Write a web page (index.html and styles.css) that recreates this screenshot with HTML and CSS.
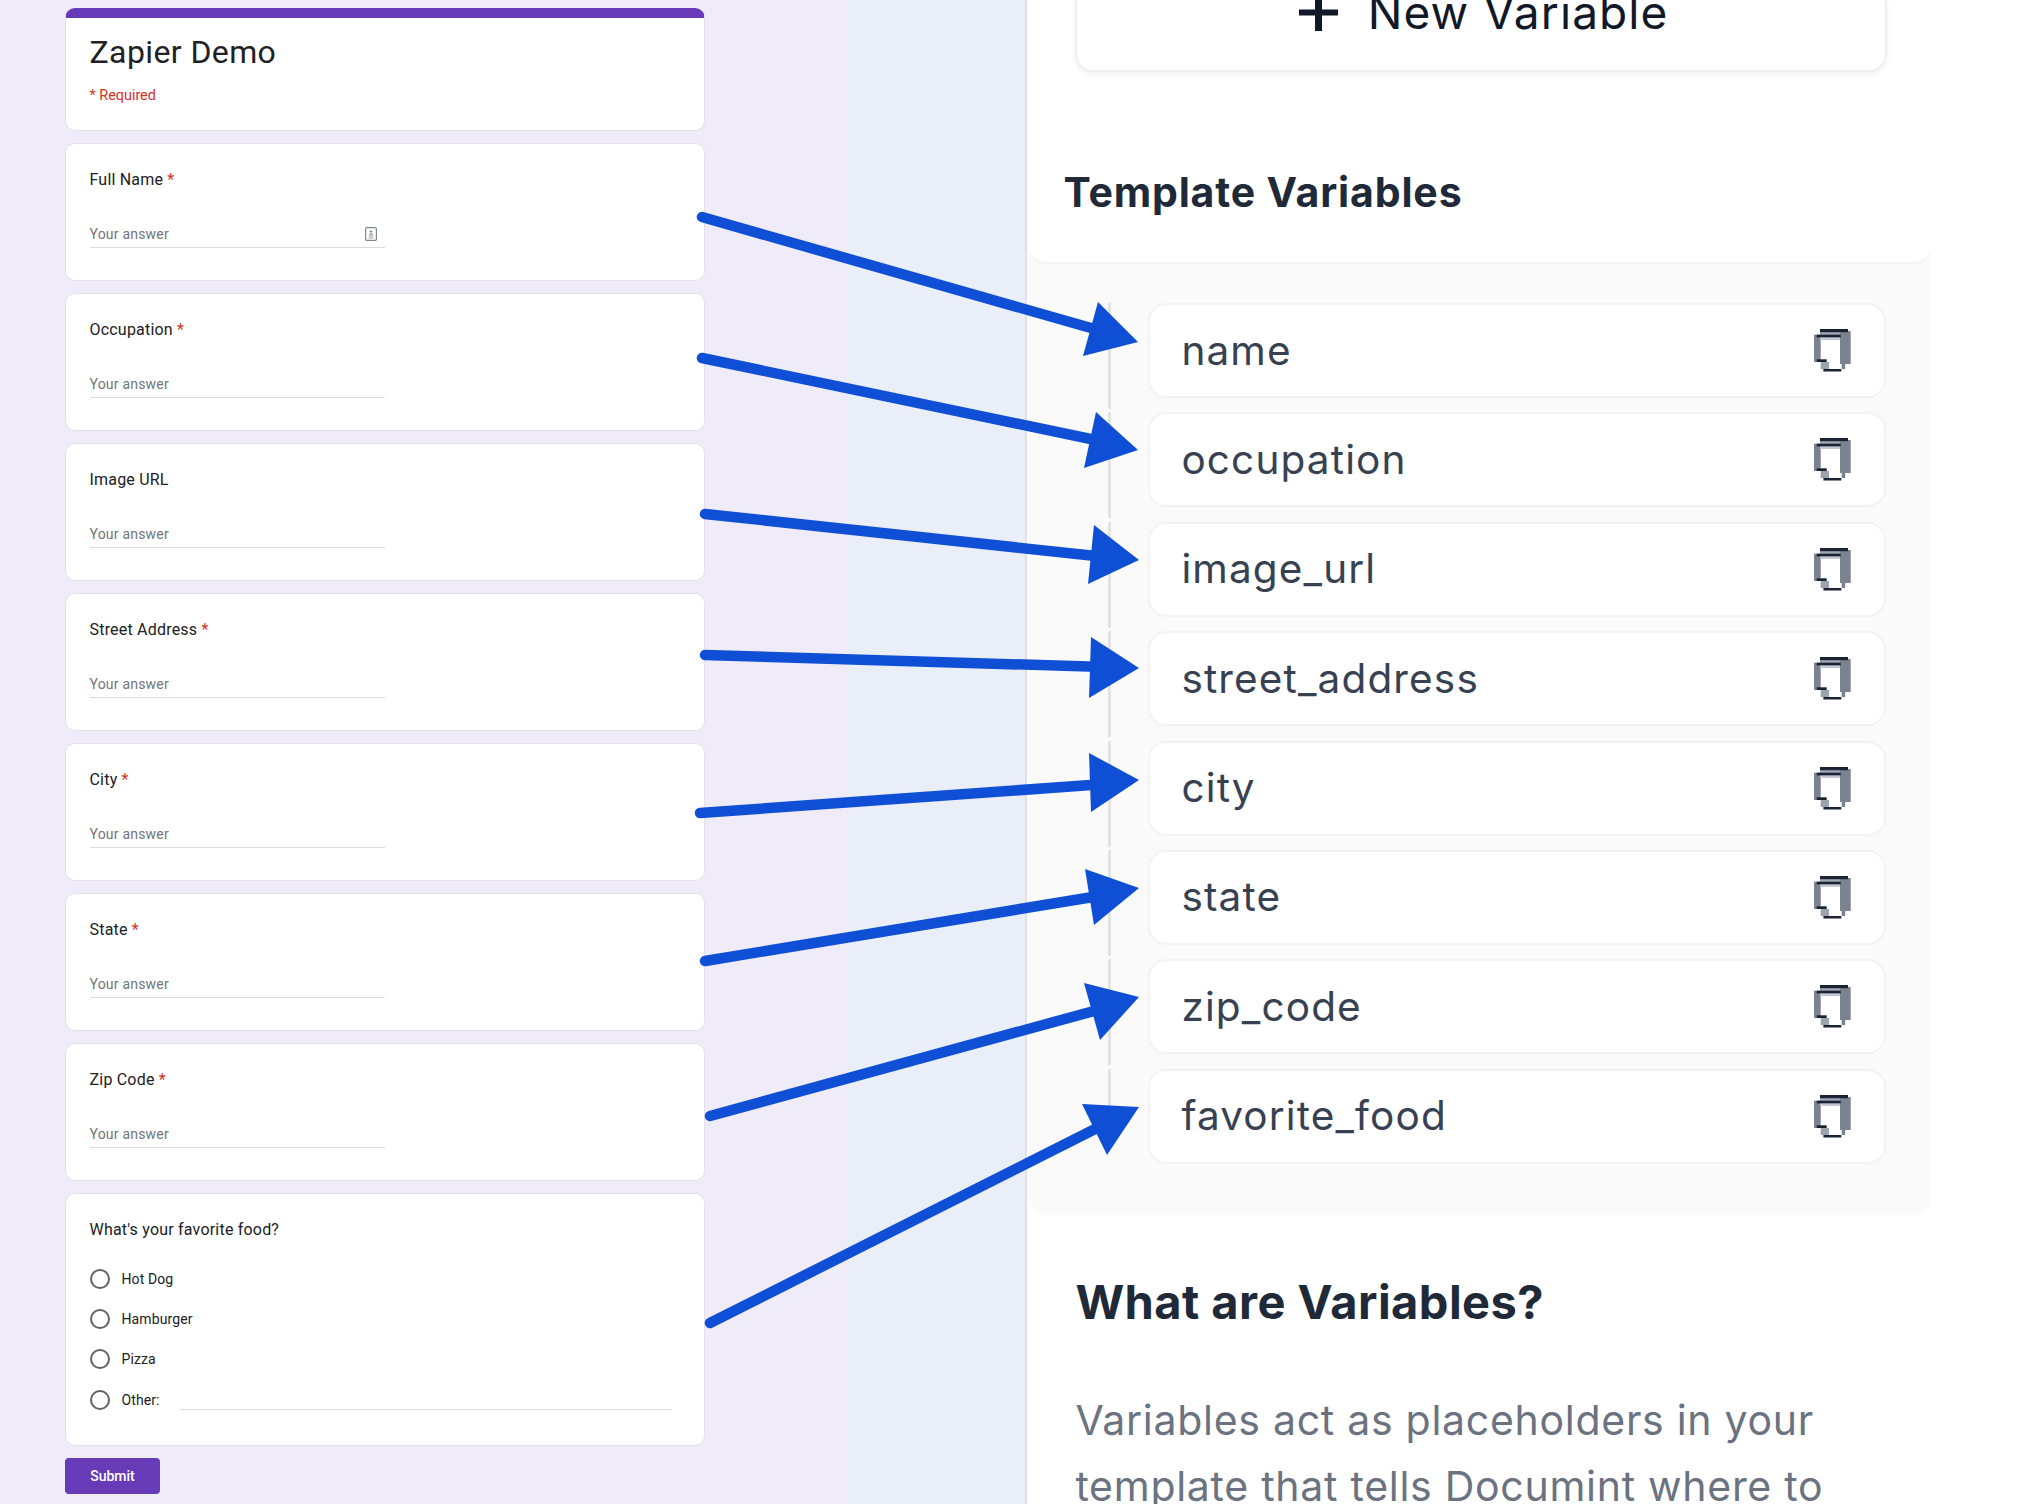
FILE: index.html
```html
<!DOCTYPE html>
<html lang="en">
<head>
<meta charset="utf-8">
<title>Zapier Demo</title>
<link rel="stylesheet" href="styles.css">
</head>
<body>
<main class="page">
  <section class="form-side">
    <div class="card head-card">
      <h1 class="form-title">Zapier Demo</h1>
      <p class="required">* Required</p>
    </div>
    <div class="card q-card">
      <div class="q-label">Full Name <span class="star">*</span></div>
      <div class="answer">Your answer
        <svg class="autofill" viewBox="0 0 12 14"><rect x="0.6" y="0.6" width="10.8" height="12.8" rx="1.2" fill="#fff" stroke="#80868b" stroke-width="1.2"/><circle cx="6" cy="4.6" r="1.2" fill="#80868b"/><path d="M3.6 8.6h4.8v1H3.6zM3.6 10.4h4.8v1H3.6z M4.4 6.4h3.2v1.6H4.4z" fill="#9aa0a6"/></svg>
      </div>
    </div>
    <div class="card q-card">
      <div class="q-label">Occupation <span class="star">*</span></div>
      <div class="answer">Your answer</div>
    </div>
    <div class="card q-card">
      <div class="q-label">Image URL</div>
      <div class="answer">Your answer</div>
    </div>
    <div class="card q-card">
      <div class="q-label">Street Address <span class="star">*</span></div>
      <div class="answer">Your answer</div>
    </div>
    <div class="card q-card">
      <div class="q-label">City <span class="star">*</span></div>
      <div class="answer">Your answer</div>
    </div>
    <div class="card q-card">
      <div class="q-label">State <span class="star">*</span></div>
      <div class="answer">Your answer</div>
    </div>
    <div class="card q-card">
      <div class="q-label">Zip Code <span class="star">*</span></div>
      <div class="answer">Your answer</div>
    </div>
    <div class="card radio-card">
      <div class="q-label">What's your favorite food?</div>
      <div class="radios">
        <div class="radio-row"><span class="radio"></span><span>Hot Dog</span></div>
        <div class="radio-row"><span class="radio"></span><span>Hamburger</span></div>
        <div class="radio-row"><span class="radio"></span><span>Pizza</span></div>
        <div class="radio-row other-row"><span class="radio"></span><span>Other:</span><span class="other-line"></span></div>
      </div>
    </div>
    <button class="submit">Submit</button>
  </section>

  <section class="panel">
    <header class="panel-head">
      <div class="new-var"><div class="new-var-inner"><svg class="plus" viewBox="0 0 39 37"><path d="M16 0h7v15.5h16v6H23V37h-7V21.5H0v-6h16z"/></svg><span>New Variable</span></div></div>
      <h2 class="tv-title">Template Variables</h2>
    </header>
    <div class="vars">
      <div class="var"><span>name</span><svg class="copy" viewBox="0 0 37 43"><use href="#copy-icon"/></svg></div>
      <div class="var"><span>occupation</span><svg class="copy" viewBox="0 0 37 43"><use href="#copy-icon"/></svg></div>
      <div class="var"><span>image_url</span><svg class="copy" viewBox="0 0 37 43"><use href="#copy-icon"/></svg></div>
      <div class="var"><span>street_address</span><svg class="copy" viewBox="0 0 37 43"><use href="#copy-icon"/></svg></div>
      <div class="var"><span>city</span><svg class="copy" viewBox="0 0 37 43"><use href="#copy-icon"/></svg></div>
      <div class="var"><span>state</span><svg class="copy" viewBox="0 0 37 43"><use href="#copy-icon"/></svg></div>
      <div class="var"><span>zip_code</span><svg class="copy" viewBox="0 0 37 43"><use href="#copy-icon"/></svg></div>
      <div class="var"><span>favorite_food</span><svg class="copy" viewBox="0 0 37 43"><use href="#copy-icon"/></svg></div>
    </div>
    <div class="about">
      <h2 class="about-title">What are Variables?</h2>
      <p class="about-text">Variables act as placeholders in your template that tells Documint where to</p>
    </div>
  </section>

  <svg class="defs" width="0" height="0" aria-hidden="true">
    <symbol id="copy-icon" viewBox="0 0 37 43">
      <rect x="26" y="2" width="10.7" height="33" fill="#7b8290"/>
      <rect x="27.7" y="35" width="3.5" height="5" fill="#7b8290"/>
      <rect x="0" y="5.7" width="6.7" height="27.3" fill="#7b8290"/>
      <rect x="6" y="3" width="20" height="3" fill="#a0a5b0"/>
      <rect x="6" y="8.4" width="20" height="2.6" fill="#c5c8d0"/>
      <rect x="6.7" y="33" width="8.3" height="7" fill="#9ca3af"/>
      <rect x="6" y="0" width="28" height="3.2" fill="#1a2236"/>
      <rect x="2.7" y="5.7" width="24" height="2.7" fill="#1a2236"/>
      <rect x="2.7" y="30.3" width="10" height="2.7" fill="#1a2236"/>
      <rect x="9.4" y="40" width="17.9" height="2.5" fill="#1a2236"/>
    </symbol>
  </svg>

  <svg class="arrows" viewBox="0 0 2018 1504">
    <g class="shafts">
      <line x1="702" y1="217" x2="1105" y2="332"/>
      <line x1="702" y1="358" x2="1105" y2="442"/>
      <line x1="705" y1="514" x2="1105" y2="557"/>
      <line x1="705" y1="655" x2="1105" y2="667"/>
      <line x1="700" y1="813" x2="1105" y2="784"/>
      <line x1="705" y1="961" x2="1105" y2="895"/>
      <line x1="710" y1="1116" x2="1105" y2="1008"/>
      <line x1="710" y1="1323" x2="1105" y2="1124"/>
    </g>
    <g class="heads">
      <polygon points="1138,342 1098,302 1083,356"/>
      <polygon points="1138,450 1096,412 1084,468"/>
      <polygon points="1139,560 1094,525 1088,584"/>
      <polygon points="1139,668 1091,637 1089,698"/>
      <polygon points="1139,780 1089,753 1091,812"/>
      <polygon points="1139,888 1085,869 1094,925"/>
      <polygon points="1139,997 1084,983 1100,1040"/>
      <polygon points="1139,1107 1082,1104 1107,1155"/>
    </g>
  </svg>
</main>
</body>
</html>
```
FILE: styles.css
```css
* { box-sizing: border-box; }
html, body { margin: 0; padding: 0; height: 1504px; overflow: hidden; background: #fff; }
body { font-family: Roboto, "Liberation Sans", sans-serif; color: #202124; }
h1, h2, p { margin: 0; font-weight: normal; }

.page { position: relative; display: flex; width: 2018px; height: 1504px; overflow: hidden; }

/* Left: the form */
.form-side {
  width: 1025px;
  flex: none;
  padding: 8px 0 0 65px;
  display: flex;
  flex-direction: column;
  align-items: flex-start;
  gap: 12.5px;
  background: linear-gradient(90deg, #f0ebf8 0, #f0ebf8 847px, #e9eef8 847px, #e9eef8 100%);
}
.card {
  width: 640px;
  background: #fff;
  border: 1.5px solid #e2e1e8;
  border-radius: 10px;
  padding-left: 23.5px;
}
.head-card {
  height: 122.5px;
  border-top: 10px solid #673ab7;
  padding-top: 16px;
}
.form-title { font-size: 32px; line-height: 36px; letter-spacing: 0.4px; color: #202124; }
.required { margin-top: 16.5px; font-size: 14.4px; line-height: 18px; color: #d93025; }
.q-card { height: 137.5px; padding-top: 25px; }
.q-label { font-size: 16px; line-height: 22px; letter-spacing: 0.2px; color: #202124; }
.star { color: #d93025; }
.answer {
  position: relative;
  width: 295px;
  height: 35px;
  margin-top: 22px;
  padding-top: 10px;
  font-size: 14px;
  line-height: 22px;
  letter-spacing: 0.2px;
  color: #70757a;
  border-bottom: 1.5px solid #dadce0;
}
.autofill { position: absolute; right: 8px; top: 14px; width: 12px; height: 14px; }
.radio-card { height: 252.5px; padding-top: 25px; }
.radios { margin-top: 17.5px; display: flex; flex-direction: column; }
.radio-row { display: flex; align-items: center; gap: 12px; height: 40px; font-size: 14px; letter-spacing: 0.1px; color: #202124; }
.radio { width: 20px; height: 20px; border: 2px solid #5f6368; border-radius: 50%; flex: none; }
.other-row { height: 42px; }
.other-line { width: 492px; height: 21px; margin-left: 8.5px; border-bottom: 1.5px solid #dadce0; flex: none; }
.submit {
  width: 95px;
  height: 36px;
  border: 0;
  border-radius: 4px;
  background: #673ab7;
  color: #fff;
  font: 500 14px Roboto, sans-serif;
}

/* Right: the panel */
.panel {
  flex: 1;
  min-width: 0;
  padding-left: 2.4px;
  border-left: 2.5px solid #e0e1e5;
  background: #fff;
}
.panel-head {
  position: relative;
  z-index: 1;
  width: 902px;
  height: 264px;
  background: #fff;
  border-bottom: 2px solid #f3f3f3;
  border-radius: 0 0 18px 18px;
}
.new-var {
  margin-left: 46px;
  width: 811.5px;
  height: 72px;
  display: flex;
  justify-content: center;
  align-items: flex-end;
  padding: 0 0 33px 5px;
  background: #fff;
  border: 2px solid #efefef;
  border-top: 0;
  border-radius: 0 0 18px 18px;
  box-shadow: 0 3px 6px rgba(0,0,0,.05);
  font: 400 46px/50px Inter, sans-serif;
  letter-spacing: 1.1px;
  color: #111827;
}
.new-var-inner { display: flex; align-items: center; gap: 30px; }
.plus { width: 39px; height: 37px; flex: none; fill: #111827; }
.tv-title {
  margin: 96px 0 0 34px;
  font: 700 41px/48px Inter, sans-serif;
  letter-spacing: 0.85px;
  color: #1f2937;
}
.vars {
  width: 902px;
  margin-top: -18px;
  padding: 57px 45.9px 50px 119px;
  display: flex;
  flex-direction: column;
  gap: 14.4px;
  background: #fafafa;
  border-radius: 0 0 18px 18px;
  box-shadow: 0 2px 2px rgba(0,0,0,.015);
}
.var {
  position: relative;
  height: 95px;
  display: flex;
  align-items: center;
  justify-content: space-between;
  padding: 0 33px 0 31px;
  background: #fff;
  border: 2px solid #f3f3f3;
  border-radius: 18px;
  font: 400 40.5px/48px Inter, sans-serif;
  letter-spacing: 1.15px;
  color: #374151;
}
.var::before {
  content: "";
  position: absolute;
  left: -42px;
  top: -2px;
  width: 2.5px;
  height: 106px;
  background: #e3e3e3;
}
.var:last-child::before { height: 40px; }
.copy { width: 37px; height: 43px; flex: none; }
.about { padding: 0 50px 0 46px; }
.about-title { margin-top: 58px; font: 700 47px/60px Inter, sans-serif; letter-spacing: 0.45px; color: #1f2937; }
.about-text { margin-top: 55px; width: 800px; font: 400 41px/66px Inter, sans-serif; letter-spacing: 0.72px; color: #6b7280; }

/* Overlay */
.defs { position: absolute; }
.arrows { position: absolute; left: 0; top: 0; width: 2018px; height: 1504px; pointer-events: none; }
.shafts line { stroke: #0f4fd6; stroke-width: 10.5; stroke-linecap: round; }
.heads polygon { fill: #0f4fd6; }
```
